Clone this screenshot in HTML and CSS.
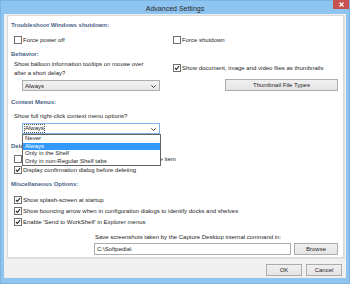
FILE: index.html
```html
<!DOCTYPE html>
<html lang="en">

<head>

  <meta charset="utf-8">

  <title>Advanced Settings</title>

  <link rel="stylesheet" href="styles.css">
</head>

<body>

  <div class="window">
    <div class="titlebar">
      <span class="title">Advanced Settings</span>
      <span class="close">
        <svg width="5" height="5" viewBox="0 0 5 5"><path d="M0.5 0.5 L4.5 4.5 M4.5 0.5 L0.5 4.5" stroke="white" stroke-width="1.1"></path></svg>
      </span>
    </div>

    <div class="client">
      <div class="panel">

        <div class="hd hd-first">Troubleshoot Windows shutdown:</div>
        <div class="cols row-shutdown">
          <label class="cb"><span class="box"></span>Force power off</label>
          <label class="cb"><span class="box"></span>Force shutdown</label>
        </div>

        <div class="hd hd-behavior">Behavior:</div>
        <div class="cols">
          <div class="col">
            <div class="txt txt-balloon">Show balloon information tooltips on mouse over<br>after a short delay?</div>
            <div class="select select-balloon">
              <span class="select-value">Always</span>
              <svg class="arrow" width="5" height="3" viewBox="0 0 5 3"><path d="M0.3 0.3 L2.5 2.5 L4.7 0.3" fill="none" stroke="#333" stroke-width="0.9"></path></svg>
            </div>
          </div>
          <div class="col">
            <label class="cb cb-thumbs"><span class="box checked"><svg width="6" height="6" viewBox="0 0 6 6"><path d="M1 3 L2.4 4.5 L5 1.2" fill="none" stroke="#222" stroke-width="1.1"></path></svg></span>Show document, image and video files as thumbnails</label>
            <button class="btn btn-thumbs">Thumbnail File Types</button>
          </div>
        </div>

        <div class="hd hd-context">Context Menus:</div>
        <div class="txt txt-context">Show full right-click context menu options?</div>
        <div class="select select-context">
          <span class="select-value focus">Always</span>
          <svg class="arrow" width="5" height="3" viewBox="0 0 5 3"><path d="M0.3 0.3 L2.5 2.5 L4.7 0.3" fill="none" stroke="#333" stroke-width="0.9"></path></svg>
          <ul class="dropdown">
            <li>Never</li>
            <li class="active">Always</li>
            <li>Only in the Shelf</li>
            <li>Only in non-Regular Shelf tabs</li>
          </ul>
        </div>

        <div class="hd hd-deletion">Deletion:</div>
        <label class="cb cb-del1"><span class="box"></span>Ask before executing the default delete action on the item</label>
        <label class="cb cb-next"><span class="box checked"><svg width="6" height="6" viewBox="0 0 6 6"><path d="M1 3 L2.4 4.5 L5 1.2" fill="none" stroke="#222" stroke-width="1.1"></path></svg></span>Display confirmation dialog before deleting</label>

        <div class="hd hd-misc">Miscellaneous Options:</div>
        <label class="cb cb-misc1"><span class="box checked"><svg width="6" height="6" viewBox="0 0 6 6"><path d="M1 3 L2.4 4.5 L5 1.2" fill="none" stroke="#222" stroke-width="1.1"></path></svg></span>Show splash-screen at startup</label>
        <label class="cb cb-next"><span class="box checked"><svg width="6" height="6" viewBox="0 0 6 6"><path d="M1 3 L2.4 4.5 L5 1.2" fill="none" stroke="#222" stroke-width="1.1"></path></svg></span>Show bouncing arrow when in configuration dialogs to identify docks and shelves</label>
        <label class="cb cb-next"><span class="box checked"><svg width="6" height="6" viewBox="0 0 6 6"><path d="M1 3 L2.4 4.5 L5 1.2" fill="none" stroke="#222" stroke-width="1.1"></path></svg></span>Enable 'Send to WorkShelf' in Explorer menus</label>

        <div class="save">
          <div class="txt txt-save">Save screenshots taken by the Capture Desktop internal command in:</div>
          <div class="save-row">
            <div class="input">C:\Softpedia\</div>
            <button class="btn btn-browse">Browse</button>
          </div>
        </div>

      </div>

      <div class="footer">
        <button class="btn btn-footer">OK</button>
        <button class="btn btn-footer">Cancel</button>
      </div>
    </div>
  </div>

</body>

</html>
```

FILE: styles.css
```css
html,
body {
  margin: 0;
  padding: 0;
}

body {
  width: 350px;
  height: 284px;
  overflow: hidden;
  font-family: "Liberation Sans", Arial, sans-serif;
  font-size: 6px;
  color: #1e1e1e;
}

.window {
  width: 350px;
  height: 284px;
  box-sizing: border-box;
  background: #8ec4f0;
  border: 1px solid #7cb4e4;
  display: flex;
  flex-direction: column;
  padding: 0 3px 5px 3px;
}

.titlebar {
  height: 13px;
  position: relative;
  display: flex;
  justify-content: center;
  align-items: center;
}

.title {
  font-size: 7px;
  color: #2a2a2a;
  margin-top: 1px;
}

.close {
  position: absolute;
  right: -3px;
  top: -1px;
  width: 16px;
  height: 9px;
  background: #c75050;
  display: flex;
  align-items: center;
  justify-content: center;
}

.client {
  flex: 1;
  background: #f0f0f0;
  padding: 1px 2px 0 3px;
  display: flex;
  flex-direction: column;
}

.panel {
  background: #fff;
  border: 1px solid #d9d9d9;
  box-shadow: 1px 1px 0 #e3e3e3;
  padding: 5px 4px 4px 3px;
  height: 243px;
  box-sizing: border-box;
}

.hd {
  font-weight: bold;
  color: #4a5f86;
  height: 8px;
  line-height: 8px;
}

.hd-behavior { margin-top: 6px; }
.hd-context { margin-top: 7px; }
.hd-deletion { margin-top: 8px; }
.hd-misc { margin-top: 6px; }

.cols {
  display: grid;
  grid-template-columns: 162px 1fr;
}

.row-shutdown { margin-top: 7px; }

.cb {
  display: flex;
  align-items: center;
  height: 8px;
  line-height: 8px;
  margin-left: 3px;
  white-space: nowrap;
}

.cols .col + .col .cb,
.row-shutdown .cb + .cb {
  margin-left: 0;
}

.box {
  width: 6px;
  height: 6px;
  border: 1px solid #707070;
  background: #fff;
  margin-right: 1px;
  flex: none;
  display: flex;
  align-items: center;
  justify-content: center;
}

.box svg {
  display: block;
}

.cb-thumbs { margin-top: 6px; }
.cb-del1 { margin-top: 5px; }
.cb-next { margin-top: 3px; }
.cb-misc1 { margin-top: 8px; }

.txt {
  margin-left: 3px;
  line-height: 9px;
  white-space: nowrap;
}

.txt-balloon { margin-top: 2px; }
.txt-context { margin-top: 6px; }

.select {
  position: relative;
  margin-left: 11px;
  width: 138px;
  height: 11px;
  box-sizing: border-box;
  border: 1px solid #acacac;
  background: linear-gradient(#f2f2f2, #e6e6e6);
  display: flex;
  align-items: center;
  padding-left: 2px;
}

.select-balloon { margin-top: 2px; }

.select-context {
  margin-top: 2px;
  border-color: #7eb4ea;
  background: #fff;
}

.select-value.focus {
  outline: 1px dotted #555;
  outline-offset: 0;
  line-height: 7px;
}

.arrow {
  position: absolute;
  right: 3px;
  top: 4px;
}

.dropdown {
  position: absolute;
  left: -1px;
  top: 10px;
  width: 139px;
  margin: 0;
  padding: 0;
  list-style: none;
  background: #fff;
  border: 1px solid #646464;
  box-sizing: border-box;
}

.dropdown li {
  height: 7.5px;
  line-height: 7.5px;
  padding-left: 2px;
}

.dropdown li.active {
  background: #3399ff;
  color: #fff;
}

.btn {
  font-family: "Liberation Sans", Arial, sans-serif;
  font-size: 6px;
  color: #1e1e1e;
  border: 1px solid #acacac;
  background: linear-gradient(#f0f0f0, #e5e5e5);
  padding: 0;
  margin: 0;
  box-sizing: border-box;
  display: block;
}

.btn-thumbs {
  margin-top: 7px;
  margin-left: 52px;
  width: 113px;
  height: 12px;
}

.save {
  margin-left: 83px;
  margin-top: 7px;
}

.txt-save {
  margin-left: 1px;
  line-height: 8px;
}

.save-row {
  display: flex;
  gap: 3px;
  margin-top: 2px;
}

.input {
  width: 197px;
  height: 12px;
  box-sizing: border-box;
  border: 1px solid #acacac;
  background: #fff;
  line-height: 10px;
  padding-left: 2px;
}

.btn-browse {
  width: 44px;
  height: 12px;
}

.footer {
  display: flex;
  justify-content: flex-end;
  gap: 4px;
  margin-top: 6px;
  padding-right: 2px;
}

.btn-footer {
  width: 36px;
  height: 12px;
}
```
